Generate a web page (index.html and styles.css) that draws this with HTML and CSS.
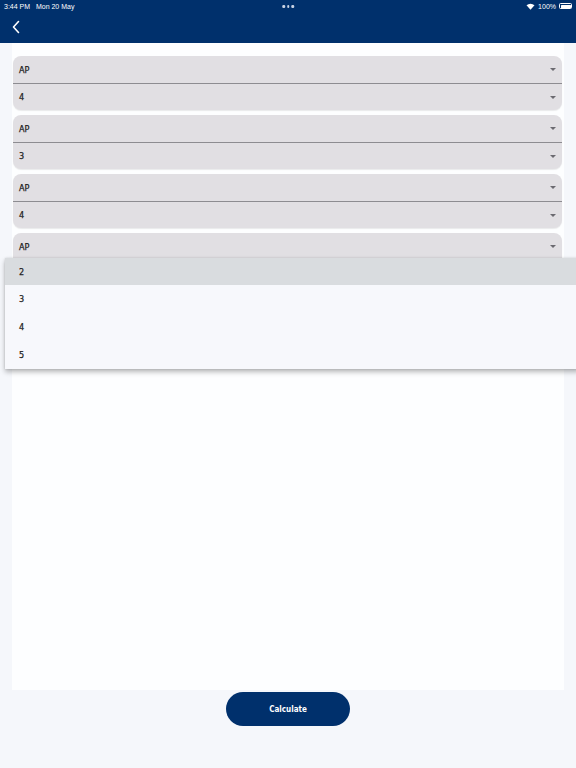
FILE: index.html
```html
<!DOCTYPE html>
<html>
<head>
<meta charset="utf-8">
<link rel="stylesheet" href="styles.css">
</head>
<body>
<header class="topbar">
  <div class="status">
    <span class="time">3:44 PM&nbsp;&nbsp; Mon 20 May</span>
    <span class="dots"><i></i><i></i><i></i></span>
    <span class="right">
      <svg class="wifi" width="9" height="7" viewBox="0 0 18 14"><path d="M9 13.5 L1 4.5 A12 12 0 0 1 17 4.5 Z" fill="#fff"/></svg>
      <span>100%</span>
      <span class="battery"><span class="fill"></span></span>
    </span>
  </div>
  <div class="nav">
    <svg class="back" width="10" height="14" viewBox="0 0 10 14"><path d="M7.5 1.5 L2.5 7 L7.5 12.5" fill="none" stroke="#fff" stroke-width="1.6" stroke-linecap="round" stroke-linejoin="round"/></svg>
  </div>
</header>
<main class="page">
  <section class="panel">
    <div class="group">
      <div class="row"><span>AP</span><i class="caret"></i></div>
      <div class="row"><span>4</span><i class="caret"></i></div>
    </div>
    <div class="group">
      <div class="row"><span>AP</span><i class="caret"></i></div>
      <div class="row"><span>3</span><i class="caret"></i></div>
    </div>
    <div class="group">
      <div class="row"><span>AP</span><i class="caret"></i></div>
      <div class="row"><span>4</span><i class="caret"></i></div>
    </div>
    <div class="group">
      <div class="row"><span>AP</span><i class="caret"></i></div>
      <div class="row"></div>
    </div>
  </section>
  <div class="actions"><button class="calc">Calculate</button></div>
  <ul class="menu">
    <li class="active">2</li>
    <li>3</li>
    <li>4</li>
    <li>5</li>
  </ul>
</main>
</body>
</html>
```
FILE: styles.css
```css
* { box-sizing: border-box; }
html, body { margin: 0; padding: 0; }
body {
  width: 576px;
  height: 768px;
  overflow: hidden;
  background: #f5f7fb;
  font-family: "DejaVu Sans Condensed", "DejaVu Sans", sans-serif;
  font-stretch: condensed;
  color: #222;
  position: relative;
}
.topbar {
  background: #00306c;
  height: 43px;
  color: #fff;
}
.status {
  height: 12px;
  display: flex;
  align-items: center;
  justify-content: space-between;
  padding: 0 4px;
  font-family: "Liberation Sans", sans-serif;
  font-size: 7px;
  position: relative;
}
.status .dots {
  position: absolute;
  left: 50%;
  top: 5px;
  transform: translateX(-50%);
  display: flex;
  gap: 2px;
}
.status .dots i {
  width: 2.5px;
  height: 2.5px;
  border-radius: 50%;
  background: #c9d3e4;
}
.status .right {
  display: flex;
  align-items: center;
  gap: 3px;
}
.battery {
  width: 13px;
  height: 6px;
  border: 1px solid #fff;
  border-radius: 1.5px;
  padding: 0.5px;
  display: flex;
}
.battery .fill { flex: 1; background: #fff; border-radius: 0.5px; }
.nav {
  height: 31px;
  display: flex;
  align-items: center;
  padding-left: 11px;
  padding-bottom: 2px;
}
.page {
  padding: 0 12px;
}
.panel {
  background: #fdfeff;
  height: 647px;
  padding: 13px 2px 0 1px;
  display: flex;
  flex-direction: column;
  gap: 5px;
}
.group {
  background: #e1dfe3;
  border-radius: 8px;
  overflow: hidden;
  box-shadow: 0 1px 1px rgba(0,0,0,0.08);
}
.row {
  height: 27px;
  display: flex;
  align-items: center;
  justify-content: space-between;
  padding: 0 6px;
  font-size: 9px;
  color: #1e1e22;
  -webkit-text-stroke: 0.25px #1e1e22;
}
.row + .row { border-top: 1px solid #8d8c91; height: 27px; }
.caret {
  width: 0; height: 0;
  border-left: 3px solid transparent;
  border-right: 3px solid transparent;
  border-top: 3px solid #6b6a70;
}
.actions {
  display: flex;
  justify-content: center;
  padding-top: 2px;
}
.calc {
  width: 124px;
  height: 34px;
  border: none;
  border-radius: 17px;
  background: #00306c;
  color: #fff;
  font-family: inherit;
  font-stretch: condensed;
  font-weight: bold;
  font-size: 8px;
}
.menu {
  position: absolute;
  top: 258px;
  left: 5px;
  right: -4px;
  margin: 0;
  padding: 0;
  list-style: none;
  background: #f7f8fc;
  box-shadow: 0 3px 5px rgba(0,0,0,0.28), 0 0 2px rgba(0,0,0,0.12);
}
.menu li {
  height: 28px;
  display: flex;
  align-items: center;
  padding-left: 14px;
  font-size: 9px;
  color: #1e1e22;
  -webkit-text-stroke: 0.25px #1e1e22;
}
.menu li.active { background: #d9dcdf; height: 27px; }
```
